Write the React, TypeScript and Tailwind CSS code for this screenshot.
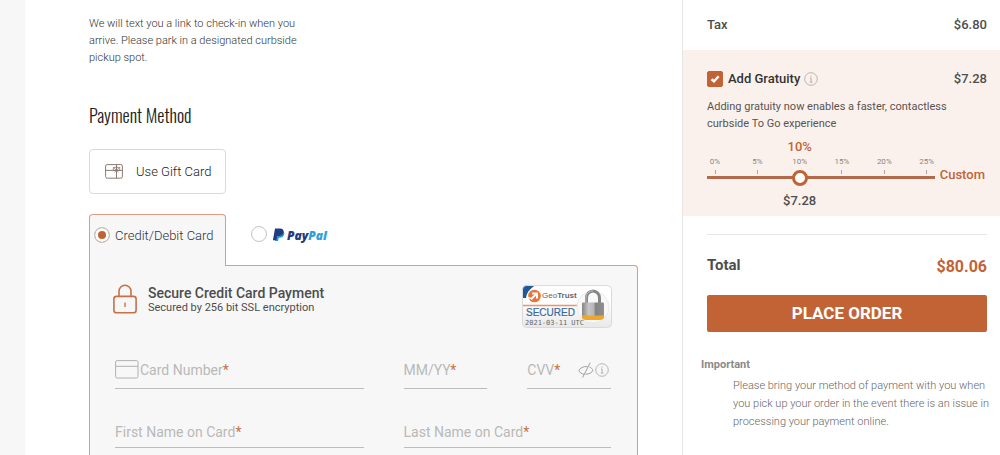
import { useState } from "react";
import type { ReactNode } from "react";

const TICKS = [0, 5, 10, 15, 20, 25];
const SUBTOTAL = 72.8;

function InfoIcon() {
  return (
    <svg viewBox="0 0 14 14" className="w-3.5 h-3.5 shrink-0" fill="none" stroke="#b3aeab">
      <circle cx="7" cy="7" r="6.3" strokeWidth="0.9" />
      <path d="M7 3.6v1.1M6 6h1.1v4M5.8 10.1h2.6" strokeWidth="1" />
    </svg>
  );
}

function GiftCardIcon() {
  return (
    <svg viewBox="0 0 18 15" className="w-[18px] h-[15px] shrink-0" fill="none" stroke="#8a7a74">
      <rect x="0.6" y="0.6" width="16.8" height="13.6" rx="1.6" />
      <path d="M0.6 6.4h16.8M11.5 0.6v13.6" />
      <path d="M8.3 3.4h6.4v3H8.3zM11.5 6.4 8.8 3.6M11.5 6.4l2.7-2.8M11.5 6.4 9.4 8.2M11.5 6.4l2.1 1.8" strokeWidth="0.8" />
    </svg>
  );
}

function LockIcon() {
  return (
    <svg viewBox="0 0 24 30" className="w-6 h-[30px] shrink-0" fill="none" stroke="#c6714a" strokeWidth="1.6">
      <rect x="0.9" y="12.4" width="22.2" height="16.4" rx="2.6" />
      <path d="M6 12.4V7.2a6 6 0 0 1 12 0v5.2" />
      <path d="M12 18.5v4.4" strokeWidth="1.4" />
    </svg>
  );
}

function CardIcon() {
  return (
    <svg viewBox="0 0 24 19" className="w-6 h-[19px] mr-px shrink-0" fill="none" stroke="#b0b0b0">
      <rect x="0.6" y="0.6" width="22.4" height="17.4" rx="1.5" />
      <path d="M0.6 6.3H23" />
    </svg>
  );
}

function HiddenEyeIcon() {
  return (
    <svg viewBox="0 0 16 16" className="w-4 h-4" fill="none" stroke="#a0a0a0">
      <path d="M6.3 12.3C3.5 12.1 1.3 10.3 1 8.4 2.2 5.8 5 4.4 9.3 4.5M11.5 5.1c1.7.6 2.9 1.7 3.4 3.2-1 2.5-3.8 4-7.4 3.9" />
      <path d="M12.2 0.6 4.6 15.6" />
    </svg>
  );
}

function PayPalLogo() {
  return (
    <svg viewBox="0 0 60 20" className="w-[60px] h-5 overflow-visible" role="img" aria-label="PayPal">
      <path d="M5.2 4.8h5.4c1.7.8 1.9 2.2 1.5 3.8-.6 2.3-2.3 3.2-4.6 3.2H6.8l-.8 3.3H3z" fill="#1f9ad6" />
      <path d="M3 2.5h5c2.7 0 4 1.4 3.5 3.8-.5 2.6-2.3 3.7-4.9 3.7H5.1l-.8 4.2H.9z" fill="#223c7e" />
      <text x="15" y="14" fontFamily="Open Sans, Liberation Sans, sans-serif" fontSize="12" fontWeight="800" fontStyle="italic">
        <tspan fill="#243b80">Pay</tspan>
        <tspan fill="#2f9fda">Pal</tspan>
      </text>
    </svg>
  );
}

function GeoTrustSeal() {
  return (
    <svg viewBox="0 0 90 43" className="w-[90px] h-[43px] mt-px shrink-0" role="img" aria-label="GeoTrust Secured">
      <defs>
        <linearGradient id="sealBg" x1="0" y1="0" x2="0" y2="1">
          <stop offset="0.4" stopColor="#ffffff" />
          <stop offset="1" stopColor="#e8e8e8" />
        </linearGradient>
        <linearGradient id="steel" x1="0" y1="0" x2="1" y2="0">
          <stop offset="0" stopColor="#858585" />
          <stop offset="0.3" stopColor="#c6c6c6" />
          <stop offset="0.55" stopColor="#b4b4b4" />
          <stop offset="0.6" stopColor="#838383" />
          <stop offset="1" stopColor="#8f8f8f" />
        </linearGradient>
        <clipPath id="sealClip">
          <rect x="0.5" y="0.5" width="89" height="42" rx="4" />
        </clipPath>
      </defs>
      <g clipPath="url(#sealClip)">
        <rect width="90" height="43" fill="url(#sealBg)" />
        <path d="M0 0h14C10 2 5 6 4 13H0z" fill="#1d5b98" />
        <circle cx="12.5" cy="11" r="6.3" fill="#e8743b" />
        <path d="M9 14.2 13.8 9.6M10.2 8.6h4.8v4.8" fill="none" stroke="#fff" strokeWidth="2" />
        <path d="M5.2 12.2l4 1.5" stroke="#fff" strokeWidth="1.4" />
        <path d="M0 20.5h56" stroke="#ee9560" strokeWidth="1.6" />
        <circle cx="71" cy="22" r="16" fill="#f8f8f8" stroke="#e6e6e6" strokeWidth="0.8" />
      </g>
      <text x="20" y="13" fontFamily="Liberation Sans, sans-serif" fontSize="8" fill="#666666">
        Geo<tspan fontWeight="700">Trust</tspan>
      </text>
      <text x="4" y="31" fontFamily="Liberation Sans, sans-serif" fontSize="10" fill="#39699f" stroke="#39699f" strokeWidth="0.2">
        SECURED
      </text>
      <text x="3" y="40" fontFamily="DejaVu Sans Mono, monospace" fontSize="7" fill="#666666">
        2021-03-11 UTC
      </text>
      <path d="M64.5 19v-6a6.5 7 0 0 1 13 0v6" fill="none" stroke="#858585" strokeWidth="3" />
      <path d="M64 18v-5a7 7 0 0 1 7-7.3" fill="none" stroke="#bcbcbc" strokeWidth="1" />
      <rect x="60" y="17.5" width="22" height="14" rx="1" fill="url(#steel)" />
      <path d="M60 30.5h22v2.5q-1 2-4 2H64q-3 0-4-2z" fill="#efa62a" />
      <rect x="0.5" y="0.5" width="89" height="42" rx="4" fill="none" stroke="#dadada" />
    </svg>
  );
}

type FieldProps = {
  label: string;
  name: string;
  icon?: ReactNode;
  children?: ReactNode;
  className?: string;
};

function Field({ label, name, icon, children, className = "h-[38px]" }: FieldProps) {
  return (
    <div className={`flex items-center border-b border-[#bcbcbc] ${className}`}>
      {icon}
      <label htmlFor={name} className="text-sm text-[#b9b9b9] whitespace-nowrap">
        {label}
        <span className="text-[#c6714a]">*</span>
      </label>
      <input id={name} name={name} required className="flex-1 w-0 min-w-0 bg-transparent text-sm outline-none" />
      {children}
    </div>
  );
}

function PaymentPanel() {
  return (
    <section className="flex-1 bg-[#f7f7f7] border border-b-0 border-[#dd9c82] rounded-tr-sm pl-[23px] pr-[25px] pt-[18px]">
      <div className="flex items-start justify-between">
        <div className="flex">
          <LockIcon />
          <div className="pl-[11px]">
            <h3 className="text-sm leading-[18px] font-medium text-[#4d4d4d]">Secure Credit Card Payment</h3>
            <p className="text-[11px] leading-3 text-[#4d4d4d]">Secured by 256 bit SSL encryption</p>
          </div>
        </div>
        <GeoTrustSeal />
      </div>

      <form className="grid grid-cols-[248fr_207fr] gap-x-10 gap-y-7 pl-0.5 pr-px pt-[23px]">
        <Field label="Card Number" name="cardNumber" icon={<CardIcon />} />
        <div className="grid grid-cols-2 gap-x-10">
          <Field label="MM/YY" name="expiry" />
          <Field label="CVV" name="cvv">
            <button type="button" aria-label="Show CVV" className="shrink-0">
              <HiddenEyeIcon />
            </button>
            <button type="button" aria-label="About CVV" className="shrink-0 pl-px pr-0.5">
              <InfoIcon />
            </button>
          </Field>
        </div>
        <Field label="First Name on Card" name="firstName" className="h-[31px]" />
        <Field label="Last Name on Card" name="lastName" className="h-[31px]" />
      </form>
    </section>
  );
}

const radioClass =
  "appearance-none w-4 h-4 shrink-0 rounded-full bg-white border border-[#c4c4c4] checked:bg-[#c26336] checked:shadow-[inset_0_0_0_3px_white]";

function Checkout() {
  const [method, setMethod] = useState("card");

  return (
    <main className="flex-1 flex flex-col pl-16 pr-11 pt-[15px]">
      <p className="w-[220px] text-[11px] leading-[17px] font-light text-[#333333]">
        We will text you a link to check-in when you arrive. Please park in a designated curbside pickup spot.
      </p>

      <h2 className="mt-[37px] text-lg leading-6 font-light text-[#222222] font-[Oswald,'Liberation_Sans_Narrow','Roboto_Condensed',sans-serif]">
        Payment Method
      </h2>

      <button
        type="button"
        className="mt-[22px] w-[137px] h-[45px] flex items-center gap-[13px] pl-[15px] bg-white border border-[#d9d9d9] rounded-sm text-[13px] font-light text-[#222222] whitespace-nowrap"
      >
        <GiftCardIcon />
        Use Gift Card
      </button>

      <div className="mt-5 flex">
        <label className="relative -mb-px w-[137px] h-[52px] flex items-start gap-[5px] pl-1 pt-3 bg-[#f7f7f7] border border-b-0 border-[#dd9c82] rounded-t-sm text-[13px] leading-[17px] font-light text-[#333333] whitespace-nowrap">
          <input
            type="radio"
            name="method"
            checked={method === "card"}
            onChange={() => setMethod("card")}
            className={radioClass}
          />
          Credit/Debit Card
        </label>
        <label className="flex items-start gap-[5px] pl-[25px] pt-3">
          <input
            type="radio"
            name="method"
            checked={method === "paypal"}
            onChange={() => setMethod("paypal")}
            className={radioClass}
          />
          <PayPalLogo />
        </label>
      </div>
      <PaymentPanel />
    </main>
  );
}

function Gratuity() {
  const [enabled, setEnabled] = useState(true);
  const [percent, setPercent] = useState(10);

  const amount = `$${((SUBTOTAL * percent) / 100).toFixed(2)}`;
  const position = `calc(8px + (100% - 16px) * ${percent / 25})`;

  return (
    <section className="bg-[#faf1ed] pl-6 pr-[13px] pt-5 pb-[7px]">
      <div className="flex items-center h-[18px] text-[13px] font-medium">
        <label className="flex items-center gap-[5px] text-[#333333]">
          <span className="relative flex">
            <input
              type="checkbox"
              checked={enabled}
              onChange={(e) => setEnabled(e.target.checked)}
              className="peer appearance-none w-4 h-4 rounded-xs border border-[#c26336] checked:bg-[#c26336]"
            />
            <svg
              viewBox="0 0 16 16"
              className="pointer-events-none absolute inset-0 w-4 h-4 hidden peer-checked:block"
              fill="none"
              stroke="white"
              strokeWidth="2.4"
            >
              <path d="M4.5 8.3 7 10.3 11.7 5.2" />
            </svg>
          </span>
          Add Gratuity
        </label>
        <button type="button" aria-label="About gratuity" className="pl-1">
          <InfoIcon />
        </button>
        <span className="ml-auto text-[#4d4d4d]">{amount}</span>
      </div>
      <p className="mt-2.5 text-[11px] leading-[17px] text-[#5a5350]">
        Adding gratuity now enables a faster, contactless curbside To Go experience
      </p>

      <div className="mt-[7px] mr-0.5 flex">
        <div className="relative flex-1 pt-[19px] pb-6">
          <output className="absolute top-0 -translate-x-1/2 text-[13px] leading-4 font-medium text-[#c26336]" style={{ left: position }}>
            {percent}%
          </output>
          <div className="flex justify-between">
            {TICKS.map((tick) => (
              <div key={tick} className="w-4 flex flex-col items-center text-[8px] leading-2 text-[#8c8480]">
                {tick}%
                <span className="mt-1 h-1 w-px bg-[#b0a5a0]" />
              </div>
            ))}
          </div>
          <input
            type="range"
            min={0}
            max={25}
            step={5}
            value={percent}
            onChange={(e) => setPercent(Number(e.target.value))}
            aria-label="Gratuity percent"
            className="-mt-[5px] relative block w-full h-4 appearance-none bg-transparent [&::-webkit-slider-runnable-track]:h-[3px] [&::-webkit-slider-runnable-track]:bg-[#b4694a] [&::-webkit-slider-thumb]:appearance-none [&::-webkit-slider-thumb]:w-4 [&::-webkit-slider-thumb]:h-4 [&::-webkit-slider-thumb]:-mt-[6px] [&::-webkit-slider-thumb]:rounded-full [&::-webkit-slider-thumb]:bg-white [&::-webkit-slider-thumb]:border-3 [&::-webkit-slider-thumb]:border-[#c26336]"
          />
          <output className="absolute bottom-0 -translate-x-1/2 text-[13px] leading-4 font-medium text-[#4d4d4d]" style={{ left: position }}>
            {amount}
          </output>
        </div>
        <button type="button" className="self-start mt-7 pl-[5px] text-[13px] leading-4 font-medium text-[#c26336]">
          Custom
        </button>
      </div>
    </section>
  );
}

function OrderSummary() {
  return (
    <aside className="w-[318px] shrink-0 border-l border-[#e6e6e6]">
      <div className="flex items-center justify-between h-[50px] pl-6 pr-[13px] text-[13px] font-medium text-[#4d4d4d]">
        <span>Tax</span>
        <span>$6.80</span>
      </div>

      <Gratuity />

      <div className="mt-[18px] ml-6 mr-[13px] border-t border-[#e6e6e6] pt-[18px]">
        <div className="flex items-start justify-between h-7">
          <span className="text-[15px] leading-6 font-bold text-[#4d4d4d]">Total</span>
          <span className="text-base leading-7 font-bold text-[#c26336]">$80.06</span>
        </div>
        <button type="button" className="mt-3.5 w-full h-[37px] rounded-xs bg-[#c26336] text-[17px] font-bold text-white">
          PLACE ORDER
        </button>
      </div>

      <div className="pl-[18px] pr-2 pt-6 text-[11px] leading-[18px]">
        <h4 className="font-bold text-[#8a8a8a]">Important</h4>
        <p className="pl-8 pt-[3px] font-light text-[#666666]">
          Please bring your method of payment with you when you pick up your order in the event there is an issue in
          processing your payment online.
        </p>
      </div>
    </aside>
  );
}

export default function App() {
  return (
    <div className="min-h-screen flex bg-white border-l-25 border-[#f7f7f7] font-[Roboto,sans-serif]">
      <Checkout />
      <OrderSummary />
    </div>
  );
}
